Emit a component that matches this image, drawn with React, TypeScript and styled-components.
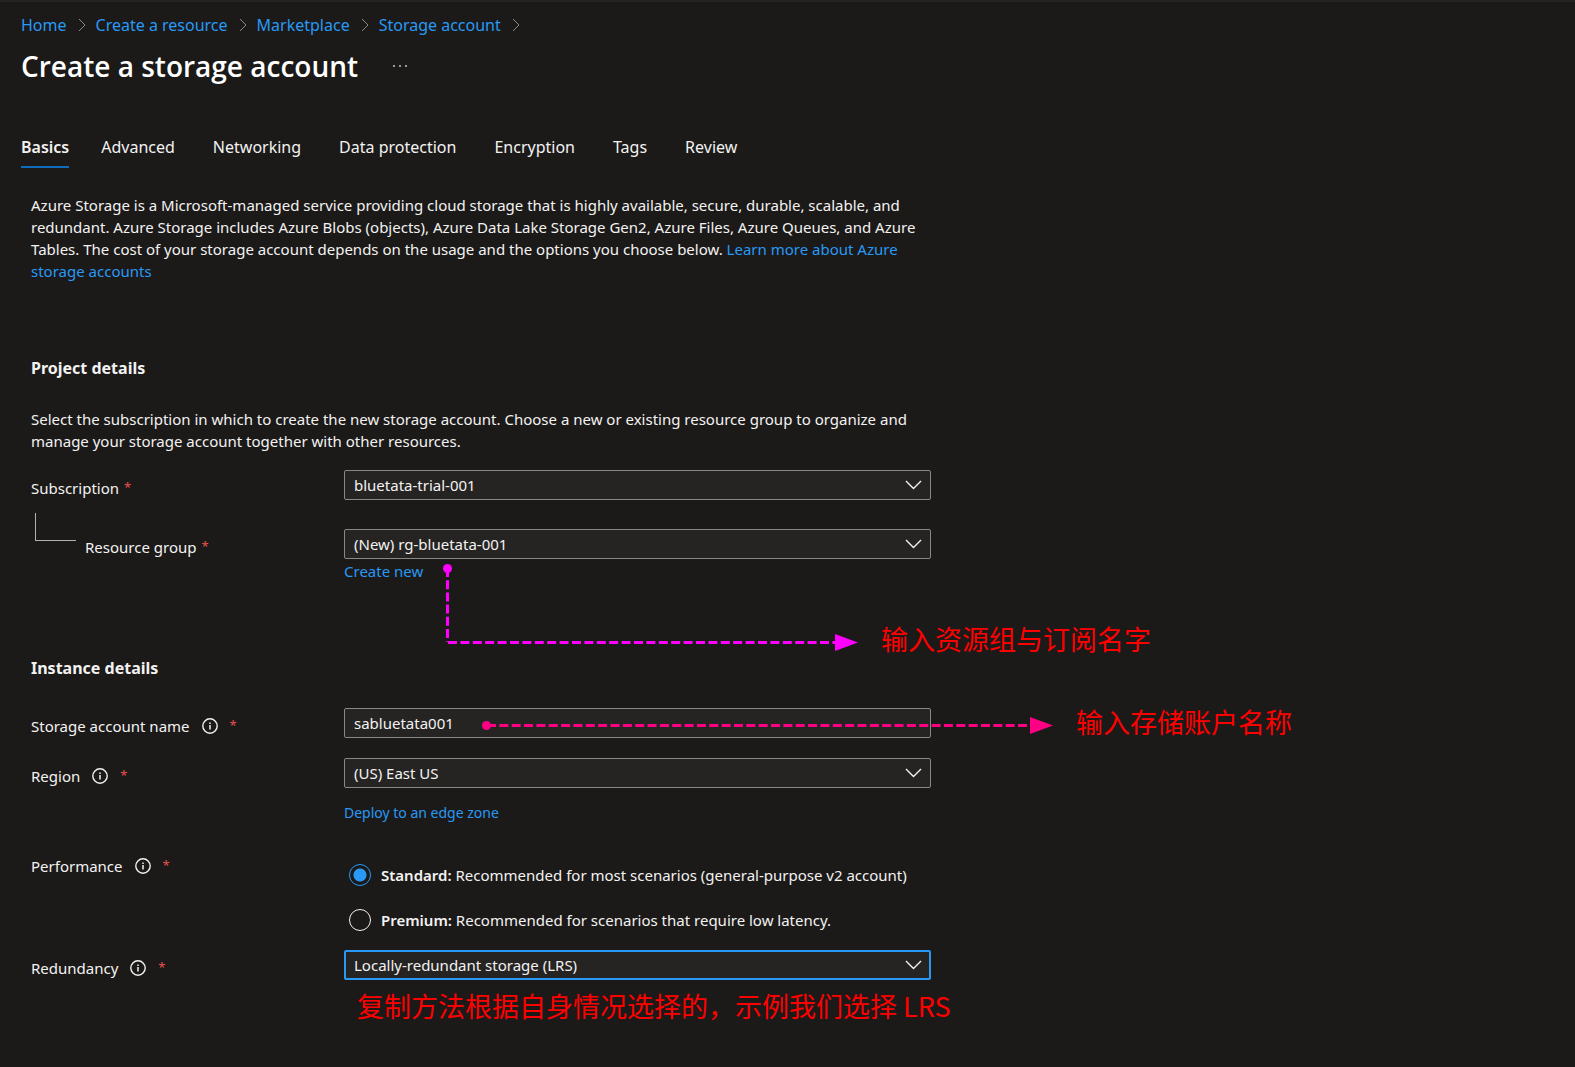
import React from "react";
import styled, { createGlobalStyle } from "styled-components";

const GlobalStyle = createGlobalStyle`
  *, *::before, *::after { box-sizing: border-box; }
  body {
    margin: 0;
    background: #1b1a19;
    color: #f3f2f1;
    font-family: "Noto Sans", "Open Sans", "Noto Sans CJK SC", sans-serif;
    font-size: 15px;
    line-height: 22px;
  }
`;

const Page = styled.div`
  min-height: 100vh;
  border-top: 2px solid #252423;
  padding: 10px 21px 40px;
  overflow-x: hidden;
`;

const Link = styled.a`
  color: #2899f5;
  text-decoration: none;
  &:hover { text-decoration: underline; }
`;

const Breadcrumb = styled.nav`
  display: flex;
  align-items: center;
  font-size: 16px;
  line-height: 26px;
`;

const Crumb = styled.span`
  display: flex;
  align-items: center;
`;

const CrumbChevron = styled.svg`
  margin: 0 10px 0 11px;
`;

const Header = styled.header`
  display: flex;
  align-items: center;
  gap: 34px;
  margin-top: 8px;
`;

const Title = styled.h1`
  margin: 0;
  font-family: "Open Sans", "Noto Sans", sans-serif;
  font-size: 28px;
  line-height: 40px;
  font-weight: 600;
  color: #ffffff;
`;

const MoreButton = styled.button`
  display: flex;
  padding: 2px 0;
  border: 0;
  background: none;
  color: #c8c6c4;
  cursor: pointer;
`;

const Tabs = styled.div`
  display: flex;
  gap: 38px;
  margin-top: 49px;
`;

const Tab = styled.button<{ $active?: boolean }>`
  margin-right: ${(p) => (p.$active ? -6 : 0)}px;
  padding: 0 0 7px;
  border: 0;
  border-bottom: 2px solid ${(p) => (p.$active ? "#0f6cbd" : "transparent")};
  background: none;
  color: #f3f2f1;
  font: inherit;
  font-size: 16px;
  line-height: 24px;
  font-weight: ${(p) => (p.$active ? 600 : 400)};
  cursor: pointer;
`;

const Form = styled.form`
  max-width: 920px;
  margin: 26px 0 0;
  padding: 0 10px;
`;

const Paragraph = styled.p`
  margin: 0;
`;

const SectionTitle = styled.h2<{ $top: number }>`
  margin: ${(p) => p.$top}px 0 28px;
  font-size: 16px;
  line-height: 24px;
  font-weight: 700;
`;

const Row = styled.div<{ $top?: number }>`
  display: flex;
  align-items: flex-start;
  margin-top: ${(p) => p.$top ?? 0}px;
`;

const LabelCell = styled.div`
  flex: 0 0 313px;
  display: flex;
  align-items: center;
  padding-top: 7px;
`;

const InfoButton = styled.button`
  display: flex;
  margin: 0 7px 0 12px;
  padding: 0;
  border: 0;
  background: none;
  color: #f3f2f1;
  cursor: pointer;
`;

const Required = styled.span`
  align-self: flex-start;
  margin-left: 5px;
  color: #e8514b;
  font-size: 13px;
  line-height: 20px;
`;

const Branch = styled.span`
  align-self: flex-start;
  width: 41px;
  height: 28px;
  margin: -23px 9px 0 4px;
  border-left: 1px solid #b3b0ad;
  border-bottom: 1px solid #b3b0ad;
`;

const ControlCell = styled.div`
  position: relative;
  flex: 1 1 auto;
  min-width: 0;
  display: flex;
  flex-direction: column;
  align-items: stretch;
`;

const SelectBox = styled.div`
  display: grid;
  align-items: center;
  & > * { grid-area: 1 / 1; }
`;

const boxStyle = `
  width: 100%;
  height: 30px;
  border-radius: 2px;
  background: #252423;
  color: #f3f2f1;
  font: inherit;
  appearance: none;
  outline: none;
`;

const Select = styled.select<{ $focused?: boolean }>`
  ${boxStyle}
  padding: 0 ${(p) => (p.$focused ? 32 : 33)}px 0 ${(p) => (p.$focused ? 8 : 9)}px;
  border: ${(p) => (p.$focused ? "2px solid #2899f5" : "1px solid #8a8886")};
`;

const SelectChevron = styled.svg`
  justify-self: end;
  margin-right: 9px;
  pointer-events: none;
`;

const TextInput = styled.input`
  ${boxStyle}
  padding: 0 9px;
  border: 1px solid #8a8886;
`;

const Below = styled.div<{ $top?: number; $small?: boolean }>`
  margin-top: ${(p) => p.$top ?? 0}px;
  font-size: ${(p) => (p.$small ? 14 : 15)}px;
`;

const Radios = styled.div`
  display: flex;
  flex-direction: column;
  gap: 23px;
  padding: 16px 0 0 5px;
`;

const RadioLabel = styled.label`
  display: flex;
  align-items: center;
  gap: 10px;
  white-space: nowrap;
`;

const RadioName = styled.strong`
  font-weight: 600;
`;

const Radio = styled.input`
  appearance: none;
  flex: none;
  width: 22px;
  height: 22px;
  margin: 0;
  border: 1px solid #f3f2f1;
  border-radius: 50%;
  &:checked {
    border-color: #2899f5;
    background: radial-gradient(circle, #2899f5 6px, transparent 7px);
  }
`;

const Note = styled.p`
  margin: 8px 0 0 13px;
  color: #ff0000;
  font-family: "Noto Sans CJK SC", sans-serif;
  font-size: 27px;
  line-height: 36px;
  white-space: nowrap;
`;

const Callout = styled.div<{ $left: number; $top: number }>`
  position: absolute;
  left: ${(p) => p.$left}px;
  top: ${(p) => p.$top}px;
  display: flex;
  align-items: flex-end;
  pointer-events: none;
`;

const CalloutText = styled.span`
  margin-left: 22px;
  color: #ff0000;
  font-family: "Noto Sans CJK SC", sans-serif;
  font-size: 27px;
  line-height: 26px;
  white-space: nowrap;
`;

const crumbs = ["Home", "Create a resource", "Marketplace", "Storage account"];
const tabs = ["Basics", "Advanced", "Networking", "Data protection", "Encryption", "Tags", "Review"];

function InfoIcon() {
  return (
    <svg width="16" height="16" viewBox="0 0 16 16" fill="none" stroke="currentColor" aria-hidden="true">
      <circle cx="8" cy="8" r="7.2" strokeWidth="1.4" />
      <path d="M8 7v4.6M8 4.4v1.6" strokeWidth="1.5" />
    </svg>
  );
}

interface LabelProps {
  htmlFor?: string;
  text: string;
  info?: boolean;
  branch?: boolean;
}

function FieldLabel({ htmlFor, text, info, branch }: LabelProps) {
  return (
    <LabelCell>
      {branch && <Branch />}
      {htmlFor ? <label htmlFor={htmlFor}>{text}</label> : <span id="performance-label">{text}</span>}
      {info && (
        <InfoButton type="button" aria-label={`About ${text}`}>
          <InfoIcon />
        </InfoButton>
      )}
      <Required>*</Required>
    </LabelCell>
  );
}

function Dropdown({ id, value, focused }: { id: string; value: string; focused?: boolean }) {
  return (
    <SelectBox>
      <Select id={id} $focused={focused}>
        <option>{value}</option>
      </Select>
      <SelectChevron width="17" height="10" viewBox="0 0 17 10" fill="none" stroke="#f3f2f1" strokeWidth="1.4" aria-hidden="true">
        <path d="M1 1l7.5 7.5L16 1" />
      </SelectChevron>
    </SelectBox>
  );
}

export default function App() {
  return (
    <Page>
      <GlobalStyle />
      <Breadcrumb aria-label="Breadcrumb">
        {crumbs.map((c) => (
          <Crumb key={c}>
            <Link href="#">{c}</Link>
            <CrumbChevron width="8" height="14" viewBox="0 0 8 14" fill="none" stroke="#8a8886" aria-hidden="true">
              <path d="M1 1l6 6-6 6" />
            </CrumbChevron>
          </Crumb>
        ))}
      </Breadcrumb>
      <Header>
        <Title>Create a storage account</Title>
        <MoreButton type="button" aria-label="More">
          <svg width="16" height="4" viewBox="0 0 16 4" fill="currentColor" aria-hidden="true">
            <circle cx="2" cy="2" r="1" />
            <circle cx="8" cy="2" r="1" />
            <circle cx="14" cy="2" r="1" />
          </svg>
        </MoreButton>
      </Header>
      <Tabs role="tablist">
        {tabs.map((t, i) => (
          <Tab key={t} type="button" role="tab" aria-selected={i === 0} $active={i === 0}>
            {t}
          </Tab>
        ))}
      </Tabs>
      <Form>
        <Paragraph>
          Azure Storage is a Microsoft-managed service providing cloud storage that is highly available, secure,
          durable, scalable, and redundant. Azure Storage includes Azure Blobs (objects), Azure Data Lake Storage
          Gen2, Azure Files, Azure Queues, and Azure Tables. The cost of your storage account depends on the usage
          and the options you choose below. <Link href="#">Learn more about Azure storage accounts</Link>
        </Paragraph>

        <SectionTitle $top={74}>Project details</SectionTitle>
        <Paragraph>
          Select the subscription in which to create the new storage account. Choose a new or existing resource group
          to organize and manage your storage account together with other resources.
        </Paragraph>
        <Row $top={18}>
          <FieldLabel htmlFor="subscription" text="Subscription" />
          <ControlCell>
            <Dropdown id="subscription" value="bluetata-trial-001" />
          </ControlCell>
        </Row>
        <Row $top={29}>
          <FieldLabel htmlFor="group" text="Resource group" branch />
          <ControlCell>
            <Dropdown id="group" value="(New) rg-bluetata-001" />
            <Below $top={1}>
              <Link href="#">Create new</Link>
            </Below>
            <Callout $left={99} $top={35}>
              <svg width="416" height="88" viewBox="0 0 416 88" fill="none" stroke="#ff00ff" strokeWidth="3" aria-hidden="true">
                <circle cx="4.5" cy="4.5" r="4.5" fill="#ff00ff" stroke="none" />
                <path d="M4.5 5v73" strokeDasharray="9 3.2" strokeDashoffset="1" />
                <path d="M5 78.5h388" strokeDasharray="9 3.4" />
                <path d="M392 70v17l23-8.5z" fill="#ff00ff" stroke="none" />
              </svg>
              <CalloutText>输入资源组与订阅名字</CalloutText>
            </Callout>
          </ControlCell>
        </Row>

        <SectionTitle $top={74}>Instance details</SectionTitle>
        <Row>
          <FieldLabel htmlFor="account" text="Storage account name" info />
          <ControlCell>
            <TextInput id="account" type="text" defaultValue="sabluetata001" />
            <Callout $left={138} $top={1}>
              <svg width="572" height="18" viewBox="0 0 572 18" fill="none" stroke="#ff0084" strokeWidth="3" aria-hidden="true">
                <circle cx="4.5" cy="8.5" r="4.5" fill="#ff0084" stroke="none" />
                <path d="M5 8.5h544" strokeDasharray="9 3.35" />
                <path d="M548 0v17l23-8.5z" fill="#ff0084" stroke="none" />
              </svg>
              <CalloutText>输入存储账户名称</CalloutText>
            </Callout>
          </ControlCell>
        </Row>
        <Row $top={20}>
          <FieldLabel htmlFor="region" text="Region" info />
          <ControlCell>
            <Dropdown id="region" value="(US) East US" />
            <Below $top={14} $small>
              <Link href="#">Deploy to an edge zone</Link>
            </Below>
          </ControlCell>
        </Row>
        <Row $top={24}>
          <FieldLabel text="Performance" info />
          <ControlCell>
            <Radios role="radiogroup" aria-labelledby="performance-label">
              <RadioLabel>
                <Radio type="radio" name="performance" defaultChecked />
                <span>
                  <RadioName>Standard:</RadioName> Recommended for most scenarios (general-purpose v2 account)
                </span>
              </RadioLabel>
              <RadioLabel>
                <Radio type="radio" name="performance" />
                <span>
                  <RadioName>Premium:</RadioName> Recommended for scenarios that require low latency.
                </span>
              </RadioLabel>
            </Radios>
          </ControlCell>
        </Row>
        <Row $top={19}>
          <FieldLabel htmlFor="redundancy" text="Redundancy" info />
          <ControlCell>
            <Dropdown id="redundancy" value="Locally-redundant storage (LRS)" focused />
            <Note>复制方法根据自身情况选择的，示例我们选择 LRS</Note>
          </ControlCell>
        </Row>
      </Form>
    </Page>
  );
}
